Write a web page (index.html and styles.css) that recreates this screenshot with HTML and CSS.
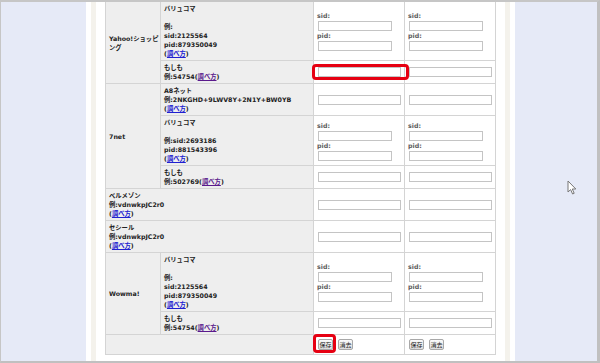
FILE: index.html
```html
<!DOCTYPE html>
<html lang="ja">

<head>
    <meta charset="UTF-8">
    <title>アフィリエイトID設定</title>
    <link rel="stylesheet" href="styles.css">
</head>

<body>
    <div class="frame">
        <div class="side"></div>
        <div class="main">
            <div class="inner">
                <table class="ids">
                    <colgroup>
                        <col class="c-site">
                        <col class="c-asp">
                        <col class="c-in">
                        <col class="c-in">
                    </colgroup>
                    <tr class="first">
                        <td class="site" rowspan="2">Yahoo!ショッピング</td>
                        <td class="asp">バリュコマ<br><br>例:<br>sid:2125564<br>pid:879350049<br>(<a href="#">調べ方</a>)</td>
                        <td class="field">
                            <div class="lbl">sid:</div><input class="short" type="text">
                            <div class="lbl">pid:</div><input class="short" type="text">
                        </td>
                        <td class="field">
                            <div class="lbl">sid:</div><input class="short" type="text">
                            <div class="lbl">pid:</div><input class="short" type="text">
                        </td>
                    </tr>
                    <tr>
                        <td class="asp">もしも<br>例:54754(<a href="#" class="seen">調べ方</a>)</td>
                        <td class="field"><span class="hl hl-input"><input class="long" type="text"></span></td>
                        <td class="field"><input class="long" type="text"></td>
                    </tr>
                    <tr>
                        <td class="site" rowspan="3">7net</td>
                        <td class="asp">A8ネット<br>例:2NKGHD+9LWV8Y+2N1Y+BW0YB<br>(<a href="#">調べ方</a>)</td>
                        <td class="field"><input class="long" type="text"></td>
                        <td class="field"><input class="long" type="text"></td>
                    </tr>
                    <tr>
                        <td class="asp">バリュコマ<br><br>例:sid:2693186<br>pid:881543396<br>(<a href="#">調べ方</a>)</td>
                        <td class="field">
                            <div class="lbl">sid:</div><input class="short" type="text">
                            <div class="lbl">pid:</div><input class="short" type="text">
                        </td>
                        <td class="field">
                            <div class="lbl">sid:</div><input class="short" type="text">
                            <div class="lbl">pid:</div><input class="short" type="text">
                        </td>
                    </tr>
                    <tr>
                        <td class="asp">もしも<br>例:502769(<a href="#" class="seen">調べ方</a>)</td>
                        <td class="field"><input class="long" type="text"></td>
                        <td class="field"><input class="long" type="text"></td>
                    </tr>
                    <tr>
                        <td class="asp" colspan="2">ベルメゾン<br>例:vdnwkpJC2r0<br>(<a href="#">調べ方</a>)</td>
                        <td class="field"><input class="long" type="text"></td>
                        <td class="field"><input class="long" type="text"></td>
                    </tr>
                    <tr>
                        <td class="asp" colspan="2">セシール<br>例:vdnwkpJC2r0<br>(<a href="#">調べ方</a>)</td>
                        <td class="field"><input class="long" type="text"></td>
                        <td class="field"><input class="long" type="text"></td>
                    </tr>
                    <tr>
                        <td class="site" rowspan="2">Wowma!</td>
                        <td class="asp">バリュコマ<br><br>例:<br>sid:2125564<br>pid:879350049<br>(<a href="#">調べ方</a>)</td>
                        <td class="field">
                            <div class="lbl">sid:</div><input class="short" type="text">
                            <div class="lbl">pid:</div><input class="short" type="text">
                        </td>
                        <td class="field">
                            <div class="lbl">sid:</div><input class="short" type="text">
                            <div class="lbl">pid:</div><input class="short" type="text">
                        </td>
                    </tr>
                    <tr>
                        <td class="asp">もしも<br>例:54754(<a href="#" class="seen">調べ方</a>)</td>
                        <td class="field"><input class="long" type="text"></td>
                        <td class="field"><input class="long" type="text"></td>
                    </tr>
                    <tr class="actions">
                        <td class="asp" colspan="2"></td>
                        <td class="field">
                            <span class="hl hl-btn"><button>保存</button></span><button>消去</button>
                        </td>
                        <td class="field">
                            <button>保存</button><button>消去</button>
                        </td>
                    </tr>
                </table>
            </div>
        </div>
        <div class="side right">
            <svg class="cursor" width="10" height="15" viewBox="0 0 10 15">
                <path d="M1 1 L1 12 L3.6 9.6 L5.6 14 L7.2 13.3 L5.3 9 L8.8 9 Z" fill="#fff" stroke="#777" stroke-width="1" stroke-linejoin="round" />
            </svg>
        </div>
    </div>
</body>

</html>
```

FILE: styles.css
```css
body {
    margin: 0;
    font-family: "DejaVu Sans", "Noto Sans CJK JP", sans-serif;
    background-color: #fff;
}

.frame {
    display: flex;
    width: 600px;
    height: 363px;
    box-sizing: border-box;
    border-top: 2px solid #c6c6c6;
    border-right: 3px solid #c0c0c0;
    border-bottom: 2px solid #c0c0c0;
    border-left: 1px solid #c6c6c6;
    overflow: hidden;
}

.side {
    width: 85px;
    background-color: #e6eaf7;
}

.side.right {
    width: 82px;
    position: relative;
}

.cursor {
    position: absolute;
    left: 52px;
    top: 178px;
}

.main {
    width: 429px;
    background-color: #fff;
    padding: 0 5px;
    box-sizing: border-box;
}

.inner {
    height: 100%;
    border-left: 5px solid #f4f2ec;
    border-right: 5px solid #f4f2ec;
    padding: 0 10px 0 9px;
    background-color: #fff;
}

.ids {
    width: 390px;
    table-layout: fixed;
    border-collapse: collapse;
    font-size: 6.3px;
    font-weight: bold;
    line-height: 9px;
    color: #222;
}

.c-site {
    width: 55px;
}

.c-asp {
    width: 153px;
}

.c-in {
    width: 91px;
}

.ids td {
    border: 1px solid #d4d4d4;
    padding: 2px 1px 2px 3px;
}

.ids tr.first td {
    border-top: none;
}

.ids td.site,
.ids td.asp {
    background-color: #eeeeee;
}

.ids td.site {
    vertical-align: middle;
}

.ids td.asp {
    vertical-align: top;
}

.ids td.field {
    background-color: #fff;
    vertical-align: middle;
    padding-left: 3px;
}

.ids a {
    color: #2020d0;
    text-decoration: underline;
}

.ids a.seen {
    color: #5a1a8c;
}

.lbl {
    color: #5c5c5c;
    line-height: 10px;
}

.ids input {
    display: block;
    height: 10px;
    margin: 0 0 0 1px;
    padding: 0;
    box-sizing: border-box;
    border: 1px solid #c4c4c4;
    background-color: #fff;
}

.ids input.short {
    width: 74px;
}

.ids input.long {
    width: 83px;
}

.actions td {
    height: 15px;
}

.ids button {
    height: 11px;
    width: 15px;
    margin: 0 4px 0 1px;
    padding: 0;
    font-family: "Noto Sans CJK JP", sans-serif;
    font-size: 6px;
    line-height: 9px;
    color: #222;
    vertical-align: middle;
    border: 1px solid #a8a8a8;
    border-radius: 2px;
    background: linear-gradient(#fbfbfb, #dcdcdc);
}

.hl {
    display: inline-block;
    position: relative;
    vertical-align: middle;
}

.hl::after {
    content: "";
    position: absolute;
    border: 3px solid #e60012;
    border-radius: 4px;
}

.hl-input::after {
    top: -3px;
    bottom: -3px;
    left: -5px;
    right: -8px;
}

.hl-btn::after {
    top: -5px;
    bottom: -3px;
    left: -4px;
    right: -3px;
}

.hl-btn button {
    display: block;
    margin-right: 0;
}

.hl-btn {
    margin-right: 4px;
}
```
